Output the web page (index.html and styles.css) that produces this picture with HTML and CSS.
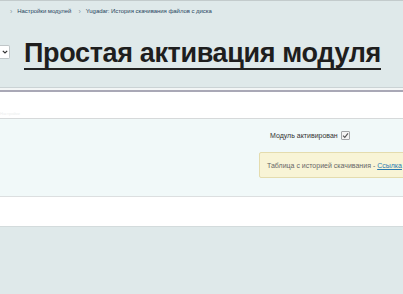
FILE: index.html
```html
<!DOCTYPE html>
<html lang="ru">
<head>
<meta charset="utf-8">
<link rel="stylesheet" href="styles.css">
</head>
<body>
<div class="page">
  <div class="topline"></div>
  <nav class="crumbs">
    <span class="sep">›</span>
    <a class="crumb" href="#">Настройки модулей</a>
    <span class="sep">›</span>
    <a class="crumb" href="#">Yugadar: История скачивания файлов с диска</a>
  </nav>
  <header class="head">
    <div class="select"><svg width="6" height="4" viewBox="0 0 6 4"><path d="M0.8 0.8 L3 3 L5.2 0.8" fill="none" stroke="#333" stroke-width="1.2"/></svg></div>
    <h1 class="title">Простая активация модуля</h1>
  </header>
  <div class="sep-line"></div>
  <section class="panel">
    <div class="tabs"><span class="tab-faint">Настройки</span></div>
    <div class="body">
      <div class="right">
        <label class="field">Модуль активирован <span class="check"><svg width="7" height="7" viewBox="0 0 7 7"><path d="M1 3.6 L2.8 5.4 L6 1.4" fill="none" stroke="#555" stroke-width="1.1"/></svg></span></label>
        <div class="note">Таблица с историей скачивания - <a href="#" class="link">Ссылка</a></div>
      </div>
    </div>
    <div class="foot"></div>
  </section>
</div>
</body>
</html>
```

FILE: styles.css
```css
html, body {
  margin: 0;
  padding: 0;
}
body {
  background: #dfe9ea;
  font-family: "Liberation Sans", Arial, sans-serif;
  overflow: hidden;
  width: 403px;
  height: 294px;
}
.page {
  width: 403px;
}
.topline {
  height: 1px;
  background: #c3cbcc;
  margin-bottom: 1px;
}
.crumbs {
  display: flex;
  align-items: center;
  height: 18px;
  font-size: 6px;
  letter-spacing: -0.05px;
  padding-left: 10px;
}
.crumb {
  color: #27455e;
  text-decoration: none;
}
.sep {
  color: #8a9aa4;
  font-size: 7px;
  margin: 0 5px 0 0;
}
.crumb + .sep {
  margin-left: 7px;
}
.head {
  display: flex;
  align-items: flex-start;
  padding-top: 18px;
  height: 49px;
}
.select {
  width: 8px;
  height: 12px;
  margin-top: 7px;
  background: #fff;
  border: 1px solid #c0c6c8;
  border-left: none;
  border-radius: 0 2px 2px 0;
  display: flex;
  align-items: center;
  justify-content: center;
  padding-left: 1px;
}
.title {
  margin: 0 0 0 14px;
  font-size: 27px;
  font-weight: bold;
  color: #1e1e1e;
  line-height: 30px;
  letter-spacing: -0.35px;
  border-bottom: 2px solid #222;
  white-space: nowrap;
}
.sep-line {
  height: 1px;
  background: #cbd3d5;
}
.panel {
  border-top: 2px solid #f3f6f6;
  background: #fff;
}
.tabs {
  height: 26px;
  border-top: 2px solid #a9a8b6;
  border-bottom: 1px solid #d6d9da;
  display: flex;
  align-items: flex-end;
}
.tab-faint {
  font-size: 4px;
  color: #eceeee;
  padding: 0 0 2px 0;
}
.body {
  background: #f1f9f9;
  height: 78px;
  border-bottom: 1px solid #dcdfe0;
  padding-left: 259px;
  padding-top: 11px;
  box-sizing: border-box;
}
.right {
  width: 220px;
}
.field {
  display: flex;
  align-items: center;
  font-size: 7px;
  color: #333;
  padding-left: 11px;
  height: 10px;
}
.check {
  display: inline-flex;
  align-items: center;
  justify-content: center;
  width: 7px;
  height: 7px;
  border: 1px solid #a3a6a8;
  border-radius: 1px;
  background: #f4f4f4;
  margin-left: 3px;
}
.note {
  margin-top: 12px;
  height: 26px;
  box-sizing: border-box;
  background: #f8f4d6;
  border: 1px solid #e4dcae;
  border-radius: 2px;
  font-size: 7px;
  color: #666;
  display: flex;
  align-items: center;
  padding-left: 7px;
  white-space: pre;
}
.link {
  color: #2a7ab0;
  text-decoration: underline;
}
.foot {
  height: 29px;
  border-bottom: 1px solid #d3dbdc;
}
```
